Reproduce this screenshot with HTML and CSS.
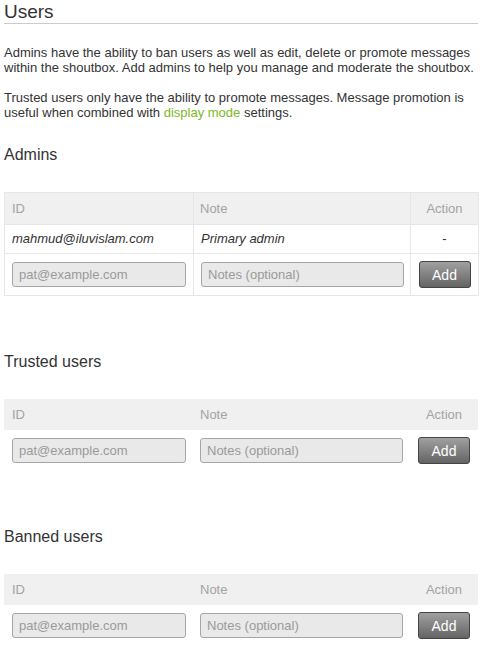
FILE: index.html
```html
<!DOCTYPE html>
<html>
<head>
<meta charset="utf-8">
<link rel="stylesheet" href="styles.css">
</head>
<body>
<h1 class="title">Users</h1>
<p class="intro">Admins have the ability to ban users as well as edit, delete or promote messages within the shoutbox. Add admins to help you manage and moderate the shoutbox.</p>
<p class="intro second">Trusted users only have the ability to promote messages. Message promotion is useful when combined with <a class="link" href="#">display mode</a> settings.</p>

<h2 class="section">Admins</h2>
<table class="users bordered">
  <colgroup><col class="c-id"><col class="c-note"><col class="c-act"></colgroup>
  <thead>
    <tr><th class="h-id">ID</th><th class="h-note">Note</th><th class="h-act">Action</th></tr>
  </thead>
  <tbody>
    <tr class="entry"><td class="d-id">mahmud@iluvislam.com</td><td class="d-note">Primary admin</td><td class="d-act">-</td></tr>
    <tr class="form"><td class="f-id"><input class="field field-id" type="text" placeholder="pat@example.com"></td><td class="f-note"><input class="field field-note" type="text" placeholder="Notes (optional)"></td><td class="f-act"><button class="add">Add</button></td></tr>
  </tbody>
</table>

<h2 class="section">Trusted users</h2>
<table class="users">
  <colgroup><col class="c-id"><col class="c-note"><col class="c-act"></colgroup>
  <thead>
    <tr><th class="h-id">ID</th><th class="h-note">Note</th><th class="h-act">Action</th></tr>
  </thead>
  <tbody>
    <tr class="form"><td class="f-id"><input class="field field-id" type="text" placeholder="pat@example.com"></td><td class="f-note"><input class="field field-note" type="text" placeholder="Notes (optional)"></td><td class="f-act"><button class="add">Add</button></td></tr>
  </tbody>
</table>

<h2 class="section">Banned users</h2>
<table class="users">
  <colgroup><col class="c-id"><col class="c-note"><col class="c-act"></colgroup>
  <thead>
    <tr><th class="h-id">ID</th><th class="h-note">Note</th><th class="h-act">Action</th></tr>
  </thead>
  <tbody>
    <tr class="form"><td class="f-id"><input class="field field-id" type="text" placeholder="pat@example.com"></td><td class="f-note"><input class="field field-note" type="text" placeholder="Notes (optional)"></td><td class="f-act"><button class="add">Add</button></td></tr>
  </tbody>
</table>
</body>
</html>
```
FILE: styles.css
```css
html, body {
  background: #ffffff;
}
body {
  margin: 0;
  padding: 1px 5px 0 4px;
  font-family: "Liberation Sans", Arial, sans-serif;
  font-size: 13px;
  line-height: 15px;
  color: #333333;
}
.title {
  margin: 0;
  font-size: 19px;
  font-weight: normal;
  line-height: 22px;
  color: #333333;
  border-bottom: 1px solid #cccccc;
}
.intro {
  margin: 21px 0 0 0;
}
.intro.second {
  margin-top: 15px;
}
.link {
  color: #80b81e;
  text-decoration: none;
}
.section {
  margin: 25px 0 0 0;
  font-size: 16px;
  font-weight: normal;
  line-height: 20px;
  color: #333333;
}
.users + .section {
  margin-top: 56px;
}
.users {
  margin-top: 27px;
  width: 474px;
  table-layout: fixed;
  border-collapse: collapse;
  border-spacing: 0;
}
.c-id { width: 189px; }
.c-note { width: 217px; }
.c-act { width: 68px; }
.users th {
  background: #f0f0f0;
  color: #a3a3a3;
  font-weight: normal;
  text-align: left;
  padding: 8px 8px;
  line-height: 15px;
}
.users th.h-note { padding-left: 7px; }
.users th.h-act { text-align: center; padding: 8px 0; }
.bordered th, .bordered td {
  border: 1px solid #e6e6e6;
}
.bordered th.h-id, .bordered td.d-id, .bordered td.f-id { padding-left: 7px; }
.bordered th.h-note, .bordered td.d-note, .bordered td.f-note { padding-left: 6px; }
.entry td {
  padding: 6px 8px 7px 8px;
  font-style: italic;
  color: #333333;
}
.entry td.d-note { padding-left: 7px; }
.entry td.d-act { text-align: center; font-style: normal; padding: 6px 0 7px; }
.form td {
  padding: 8px 0 8px 8px;
  vertical-align: middle;
}
.form td.f-note { padding-left: 7px; }
.form td.f-act { text-align: center; padding-left: 0; }
.field {
  display: block;
  box-sizing: border-box;
  height: 25px;
  margin: 0;
  padding: 0 6px;
  border: 1px solid #a6a6a6;
  border-radius: 3px;
  background: #e9e9e9;
  font-family: "Liberation Sans", Arial, sans-serif;
  font-size: 13px;
  color: #333333;
}
.field::placeholder {
  color: #9a9a9a;
}
.field-id { width: 174px; }
.field-note { width: 203px; }
.add {
  display: inline-block;
  box-sizing: border-box;
  width: 52px;
  height: 27px;
  margin: -1px 0;
  padding: 0;
  border: 1px solid #444444;
  border-radius: 3px;
  background: linear-gradient(#a0a0a0, #646464);
  color: #ffffff;
  font-family: "Liberation Sans", Arial, sans-serif;
  font-size: 14px;
  vertical-align: middle;
}
```
